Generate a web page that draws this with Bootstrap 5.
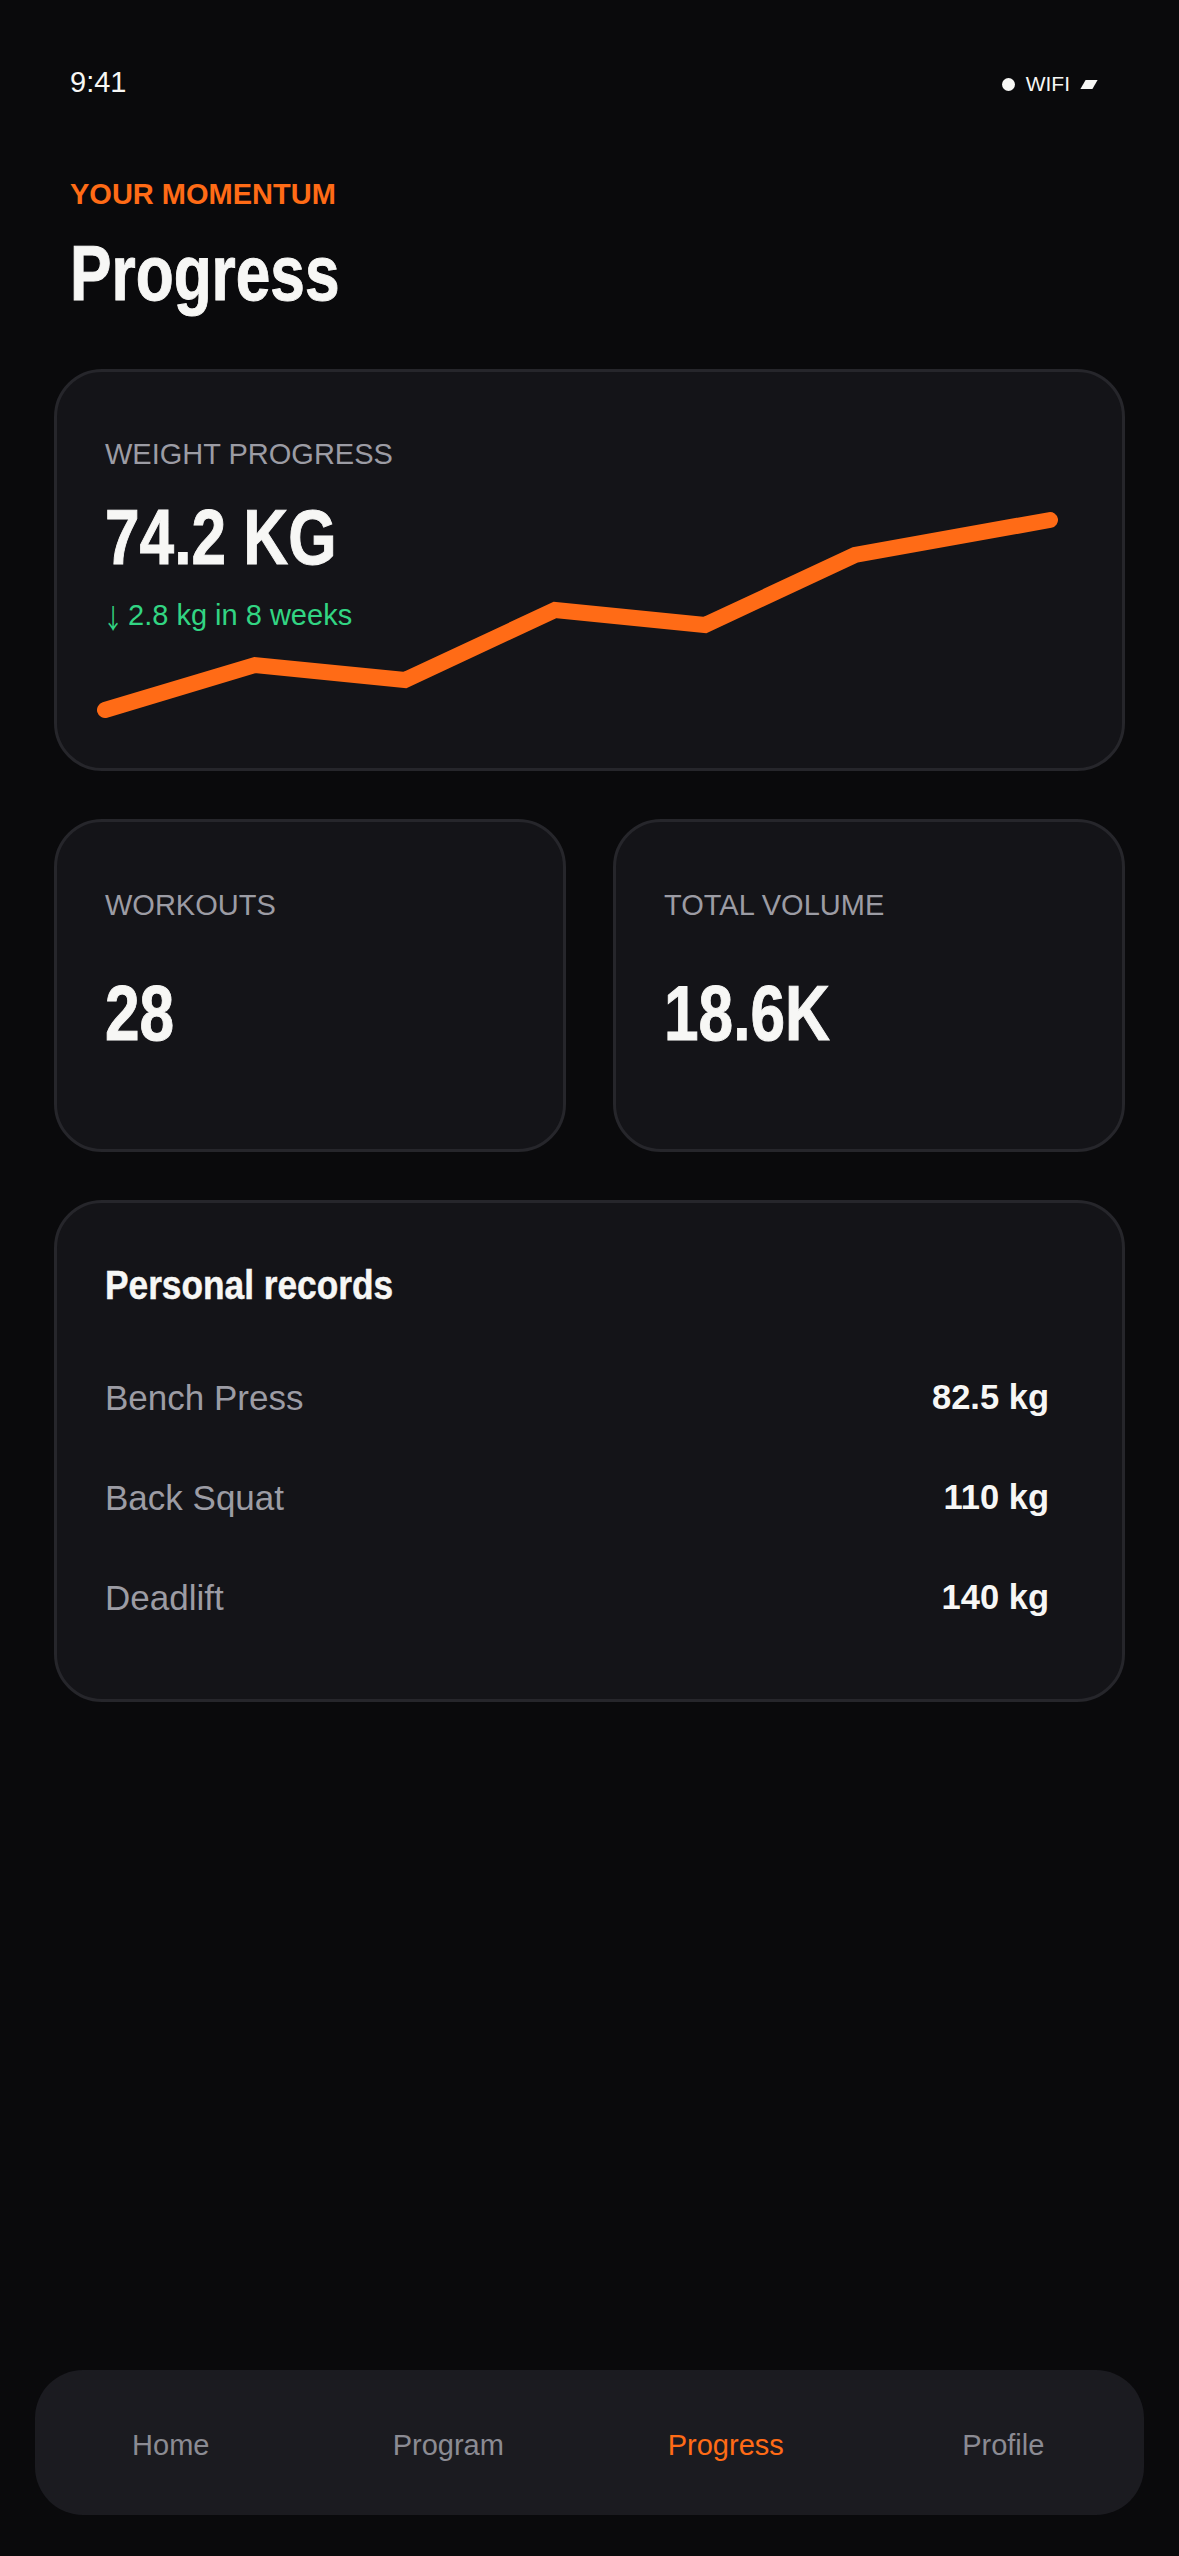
<!DOCTYPE html>
<html lang="en">
<head>
    <meta charset="UTF-8">
    <meta name="viewport" content="width=device-width, initial-scale=1.0">
    <title>Progress</title>
    <link href="https://cdn.jsdelivr.net/npm/bootstrap@5.3.3/dist/css/bootstrap.min.css" rel="stylesheet">
    <style>
        body {
            background: #0a0a0c;
            color: #f7f7f5;
            font-family: "Liberation Sans", Arial, sans-serif;
        }
        .phone-screen {
            width: 1179px;
            height: 2556px;
            overflow: hidden;
            position: relative;
            padding: 0 54px;
        }
        .status-row {
            height: 164px;
            padding: 64px 16px 0;
            font-size: 29px;
            line-height: 36px;
        }
        .status-icons {
            font-size: 21px;
            gap: 11px;
            margin-right: 14px;
            height: 36px;
            padding-top: 4px;
        }
        .status-dot {
            width: 13px;
            height: 13px;
            border-radius: 50%;
            background: #f7f7f5;
        }
        .status-batt {
            width: 12px;
            height: 9px;
            background: #f7f7f5;
            transform: skewX(-30deg);
            margin-left: 2px;
        }
        .page-head {
            padding: 12px 16px 0;
            height: 205px;
        }
        .eyebrow {
            color: #ff6b16;
            font-size: 29px;
            font-weight: 700;
            line-height: 36px;
        }
        /* no narrow face installed, so the big bold text is squeezed */
        .narrow-text {
            display: inline-block;
            transform: scaleX(.797);
            transform-origin: left center;
            -webkit-text-stroke: 1px currentColor;
        }
        .page-title {
            font-size: 78px;
            font-weight: 700;
            line-height: 86px;
            margin: 18px 0 0;
        }
        .stat-box {
            background: #141418;
            border: 3px solid #26262b;
            border-radius: 48px;
            padding: 64px 48px 0;
        }
        .weight-box {
            height: 402px;
            position: relative;
            margin-bottom: 48px;
        }
        .split-row {
            gap: 47px;
            margin-bottom: 48px;
        }
        .split-row .stat-box {
            flex: 1 1 0;
            height: 333px;
            padding-top: 65px;
        }
        .stat-label {
            color: #9c9ca4;
            font-size: 29px;
            line-height: 36px;
        }
        .stat-value {
            font-size: 78px;
            font-weight: 700;
            line-height: 86px;
        }
        .weight-box .stat-value {
            margin-top: 22px;
        }
        .split-row .stat-value {
            margin-top: 47px;
        }
        .stat-delta {
            color: #32d583;
            font-size: 29px;
            line-height: 36px;
            margin-top: 17px;
        }
        .delta-arrow {
            display: inline-block;
            width: 15px;
            font-family: "Noto Sans CJK SC", sans-serif;
            font-size: 27px;
            line-height: 1;
            transform: translate(-2px, 4px) scaleX(.75);
            transform-origin: left center;
        }
        .trend-line {
            position: absolute;
            left: -3px;
            top: -3px;
        }
        .records-box {
            height: 502px;
            padding-top: 58px;
        }
        .records-title {
            font-size: 41px;
            font-weight: 700;
            line-height: 48px;
            margin-bottom: 39px;
        }
        .records-title .narrow-text {
            transform: scaleX(.86);
            -webkit-text-stroke: .5px currentColor;
        }
        .record-row {
            height: 100px;
            padding-right: 25px;
            font-size: 35px;
        }
        .record-name {
            color: #9c9ca4;
        }
        .record-val {
            font-size: 34.5px;
            font-weight: 700;
        }
        .tab-bar {
            position: absolute;
            left: 35px;
            right: 35px;
            top: 2370px;
            height: 145px;
            padding-top: 6px;
            background: #1b1b20;
            border-radius: 48px;
            font-size: 29px;
        }
        .tab-item {
            flex: 0 0 277.5px;
            text-align: center;
            color: #8b8b93;
        }
        .tab-item:first-child {
            margin-left: -3px;
        }
        .tab-item.is-active {
            color: #ff6b16;
        }
    </style>
</head>
<body>
    <div class="phone-screen">
        <div class="status-row d-flex justify-content-between">
            <div>9:41</div>
            <div class="status-icons d-flex align-items-center">
                <span class="status-dot"></span>
                <span>WIFI</span>
                <span class="status-batt"></span>
            </div>
        </div>

        <div class="page-head">
            <div class="eyebrow">YOUR MOMENTUM</div>
            <h1 class="page-title"><span class="narrow-text">Progress</span></h1>
        </div>

        <div class="stat-box weight-box">
            <div class="stat-label">WEIGHT PROGRESS</div>
            <div class="stat-value"><span class="narrow-text">74.2 KG</span></div>
            <div class="stat-delta"><span class="delta-arrow">↓</span> 2.8 kg in 8 weeks</div>
            <svg class="trend-line" width="1071" height="402" viewBox="54 369 1071 402" fill="none">
                <polyline points="105,710 255,665 405,680 555,610 705,625 855,555 1050,520" stroke="#ff6b16" stroke-width="16" stroke-linecap="round" stroke-linejoin="miter"></polyline>
            </svg>
        </div>

        <div class="split-row d-flex">
            <div class="stat-box">
                <div class="stat-label">WORKOUTS</div>
                <div class="stat-value"><span class="narrow-text">28</span></div>
            </div>
            <div class="stat-box">
                <div class="stat-label">TOTAL VOLUME</div>
                <div class="stat-value"><span class="narrow-text">18.6K</span></div>
            </div>
        </div>

        <div class="stat-box records-box">
            <div class="records-title"><span class="narrow-text">Personal records</span></div>
            <div class="record-row d-flex justify-content-between align-items-center">
                <span class="record-name">Bench Press</span>
                <span class="record-val">82.5 kg</span>
            </div>
            <div class="record-row d-flex justify-content-between align-items-center">
                <span class="record-name">Back Squat</span>
                <span class="record-val">110 kg</span>
            </div>
            <div class="record-row d-flex justify-content-between align-items-center">
                <span class="record-name">Deadlift</span>
                <span class="record-val">140 kg</span>
            </div>
        </div>

        <div class="tab-bar d-flex align-items-center">
            <div class="tab-item">Home</div>
            <div class="tab-item">Program</div>
            <div class="tab-item is-active">Progress</div>
            <div class="tab-item">Profile</div>
        </div>
    </div>

    <script src="https://cdn.jsdelivr.net/npm/bootstrap@5.3.3/dist/js/bootstrap.bundle.min.js"></script>
</body>
</html>
